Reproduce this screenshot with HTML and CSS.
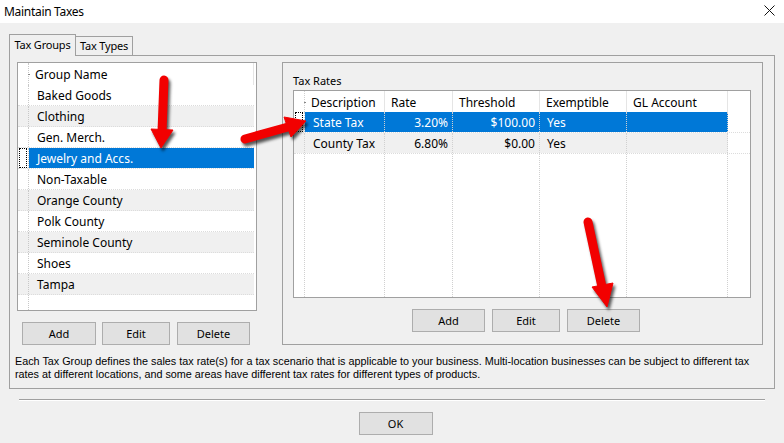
FILE: index.html
```html
<!DOCTYPE html>
<html lang="en">
<head>
    <meta charset="UTF-8">
    <title>Maintain Taxes</title>
    <link rel="stylesheet" href="styles.css">
</head>
<body>
    <div class="titlebar">
        <span class="title">Maintain Taxes</span>
        <svg class="close" width="11" height="11" viewBox="0 0 11 11">
            <path d="M0.5 0.5 L10.5 10.5 M10.5 0.5 L0.5 10.5" stroke="#111" stroke-width="1" fill="none"/>
        </svg>
    </div>

    <div class="dialog">
        <div class="tabs">
            <div class="tab active">Tax Groups</div>
            <div class="tab">Tax Types</div>
        </div>

        <div class="panel">
            <div class="panel-main">
                <div class="groups">
                    <div class="list">
                        <div class="list-head">
                            <span class="rowhdr"><i class="tick"></i></span>
                            <span class="name">Group Name</span>
                        </div>
                        <div class="list-row"><span class="rowhdr"></span><span class="name">Baked Goods</span></div>
                        <div class="list-row alt"><span class="rowhdr"></span><span class="name">Clothing</span></div>
                        <div class="list-row"><span class="rowhdr"></span><span class="name">Gen. Merch.</span></div>
                        <div class="list-row selected"><span class="rowhdr"><i class="focus"></i></span><span class="name">Jewelry and Accs.</span></div>
                        <div class="list-row"><span class="rowhdr"></span><span class="name">Non-Taxable</span></div>
                        <div class="list-row alt"><span class="rowhdr"></span><span class="name">Orange County</span></div>
                        <div class="list-row"><span class="rowhdr"></span><span class="name">Polk County</span></div>
                        <div class="list-row alt"><span class="rowhdr"></span><span class="name">Seminole County</span></div>
                        <div class="list-row"><span class="rowhdr"></span><span class="name">Shoes</span></div>
                        <div class="list-row alt"><span class="rowhdr"></span><span class="name">Tampa</span></div>
                        <div class="list-fill"><span class="rowhdr"></span></div>
                    </div>
                    <div class="buttons left-buttons">
                        <button class="btn w-add">Add</button>
                        <button class="btn w-edit">Edit</button>
                        <button class="btn w-del">Delete</button>
                    </div>
                </div>

                <div class="groupbox">
                    <div class="groupbox-label">Tax Rates</div>
                    <div class="grid">
                        <div class="grid-row grid-head">
                            <span class="c rh"><i class="tick"></i></span>
                            <span class="c">Description</span>
                            <span class="c">Rate</span>
                            <span class="c">Threshold</span>
                            <span class="c">Exemptible</span>
                            <span class="c">GL Account</span>
                        </div>
                        <div class="grid-row selected">
                            <span class="c rh"><i class="focus"></i></span>
                            <span class="c desc">State Tax</span>
                            <span class="c num">3.20%</span>
                            <span class="c num">$100.00</span>
                            <span class="c txt">Yes</span>
                            <span class="c"></span>
                        </div>
                        <div class="grid-row alt">
                            <span class="c rh"></span>
                            <span class="c desc">County Tax</span>
                            <span class="c num">6.80%</span>
                            <span class="c num">$0.00</span>
                            <span class="c txt">Yes</span>
                            <span class="c"></span>
                        </div>
                        <div class="grid-row grid-fill">
                            <span class="c rh"></span>
                            <span class="c"></span>
                            <span class="c"></span>
                            <span class="c"></span>
                            <span class="c"></span>
                            <span class="c"></span>
                        </div>
                    </div>
                    <div class="buttons right-buttons">
                        <button class="btn w-add">Add</button>
                        <button class="btn w-edit">Edit</button>
                        <button class="btn w-del">Delete</button>
                    </div>
                </div>
            </div>

            <div class="note">
                <div>Each Tax Group defines the sales tax rate(s) for a tax scenario that is applicable to your business. Multi-location businesses can be subject to different tax</div>
                <div>rates at different locations, and some areas have different tax rates for different types of products.</div>
            </div>
        </div>

        <div class="separator"></div>

        <div class="footer">
            <button class="btn ok">OK</button>
        </div>
    </div>

    <!-- red callout arrows drawn over the dialog -->
    <svg class="arrows" width="784" height="443" viewBox="0 0 784 443">
        <g class="arrow">
            <line x1="164" y1="80" x2="162" y2="132" />
            <polygon points="151,129 173,130 161,148" />
        </g>
        <g class="arrow">
            <line x1="245" y1="139" x2="288" y2="127" />
            <polygon points="284,117 291,137 306,121" />
        </g>
        <g class="arrow">
            <line x1="588" y1="222" x2="602" y2="287" />
            <polygon points="592,287 613,283 607,307" />
        </g>
    </svg>
</body>
</html>
```

FILE: styles.css
```css
body {
    margin: 0;
    width: 784px;
    height: 443px;
    position: relative;
    overflow: hidden;
    background-color: #f0f0f0;
    font-family: "Noto Sans", "Open Sans", sans-serif;
    font-size: 12px;
    color: #000;
}

.titlebar {
    height: 23px;
    background-color: #fff;
    display: flex;
    align-items: center;
    justify-content: space-between;
    padding: 0 9px 0 4px;
}
.title {
    font-size: 12px;
    letter-spacing: -0.3px;
}
.close {
    margin-top: -2px;
}

.dialog {
    padding: 11px 9px 0 9px;
}

.tabs {
    display: flex;
    align-items: flex-end;
    height: 21px;
}
.tab {
    box-sizing: border-box;
    height: 19px;
    border: 1px solid #a0a0a0;
    border-bottom: none;
    border-left: none;
    font-size: 11px;
    line-height: 18px;
    text-align: center;
    letter-spacing: -0.2px;
}
.tab.active {
    width: 67px;
    height: 22px;
    margin-bottom: -1px;
    border-left: 1px solid #a0a0a0;
    background-color: #f0f0f0;
    position: relative;
    z-index: 1;
    line-height: 20px;
}
.tab:not(.active) {
    width: 57px;
}

.panel {
    box-sizing: border-box;
    height: 334px;
    border: 1px solid #a0a0a0;
    padding: 6px 7px 0 7px;
}
.panel-main {
    display: flex;
    gap: 25px;
}

/* left list */
.groups {
    width: 240px;
}
.list {
    box-sizing: border-box;
    height: 249px;
    border: 1px solid #a0a0a0;
    background-color: #fff;
    display: flex;
    flex-direction: column;
}
.list-head, .list-row, .list-fill {
    display: flex;
    box-sizing: border-box;
    width: 236px;
}
.list-head {
    height: 22px;
    line-height: 24px;
}
.list-row {
    height: 21px;
    line-height: 22px;
    border-bottom: 1px dotted #dcdcdc;
}
.list-fill {
    flex: 1;
}
.list .rowhdr {
    width: 10px;
    flex: none;
    border-right: 1px dotted #c8c8c8;
    position: relative;
}
.list .name {
    flex: 1;
    padding-left: 8px;
    overflow: hidden;
}
.list-head .name {
    padding-left: 6px;
    border-right: 1px solid #e5e5e5;
}
.list-row.alt {
    background-color: #f0f0f0;
}
.list-row.selected .name {
    background-color: #0078d7;
    color: #fff;
}

.tick {
    position: absolute;
    right: -2px;
    top: 11px;
    width: 2px;
    height: 1px;
    background-color: #888;
}
.focus {
    position: absolute;
    left: 1px;
    top: 0;
    right: 1px;
    bottom: 0;
    border: 1px dotted #000;
}

.buttons {
    display: flex;
}
.btn {
    box-sizing: border-box;
    height: 23px;
    padding: 0;
    border: 1px solid #adadad;
    background-color: #e1e1e1;
    font-family: "Noto Sans", "Open Sans", sans-serif;
    font-size: 11px;
    color: #000;
}
.w-add { width: 74px; }
.w-edit { width: 68px; }
.w-del { width: 73px; }

.left-buttons {
    margin-top: 11px;
    padding-left: 5px;
    gap: 6px;
}
.left-buttons .w-del {
    margin-left: 1px;
}

/* right group box */
.groupbox {
    box-sizing: border-box;
    width: 481px;
    height: 283px;
    border: 1px solid #a0a0a0;
    padding: 0 10px;
}
.groupbox-label {
    font-size: 11px;
    height: 14px;
    line-height: 14px;
    margin-top: 11px;
    margin-bottom: 2px;
}
.grid {
    box-sizing: border-box;
    width: 458px;
    height: 208px;
    border: 1px solid #a0a0a0;
    background-color: #fff;
    display: flex;
    flex-direction: column;
}
.grid-row {
    display: grid;
    grid-template-columns: 11px 80px 68px 87px 87px 101px;
    height: 21px;
    box-sizing: border-box;
    line-height: 22px;
    border-bottom: 1px dotted #dcdcdc;
}
.grid-row .c {
    border-right: 1px dotted #d0d0d0;
    white-space: nowrap;
    overflow: hidden;
}
.grid-row .rh {
    position: relative;
    overflow: visible;
}
.grid-head {
    border-bottom: none;
    line-height: 23px;
}
.grid-head .c {
    border-right: 1px solid #e5e5e5;
    padding-left: 6px;
}
.grid-head .rh {
    padding-left: 0;
    border-right: 1px dotted #d0d0d0;
}
.grid-fill {
    flex: 1;
    border-bottom: none;
}
.grid-row .desc { padding-left: 8px; }
.grid-row .num { text-align: right; padding-right: 4px; }
.grid-row .txt { padding-left: 7px; }
.grid-row.alt .c {
    background-color: #f0f0f0;
}
.grid-row.selected .c:not(.rh) {
    background-color: #0078d7;
    color: #fff;
}

.right-buttons {
    margin-top: 11px;
    padding-left: 119px;
    gap: 7px;
}
.right-buttons .w-add { width: 73px; }

.note {
    margin: 10px 0 0 -2px;
    font-family: "Liberation Sans", Arial, sans-serif;
    font-size: 10.8px;
    line-height: 13px;
    white-space: nowrap;
}

.separator {
    margin: 10px 10px 0 10px;
    border-top: 1px solid #a0a0a0;
    border-bottom: 1px solid #fff;
}

.footer {
    display: flex;
    justify-content: center;
    padding-left: 7px;
    margin-top: 11px;
}
.ok {
    width: 74px;
}

.arrows {
    position: absolute;
    top: 0;
    left: 0;
    pointer-events: none;
    filter: drop-shadow(2px 3px 1.5px rgba(0, 0, 0, 0.65));
}
.arrow line {
    stroke: #f20000;
    stroke-width: 9;
    stroke-linecap: round;
}
.arrow polygon {
    fill: #f20000;
    stroke: #f20000;
    stroke-width: 1;
    stroke-linejoin: round;
}
```
